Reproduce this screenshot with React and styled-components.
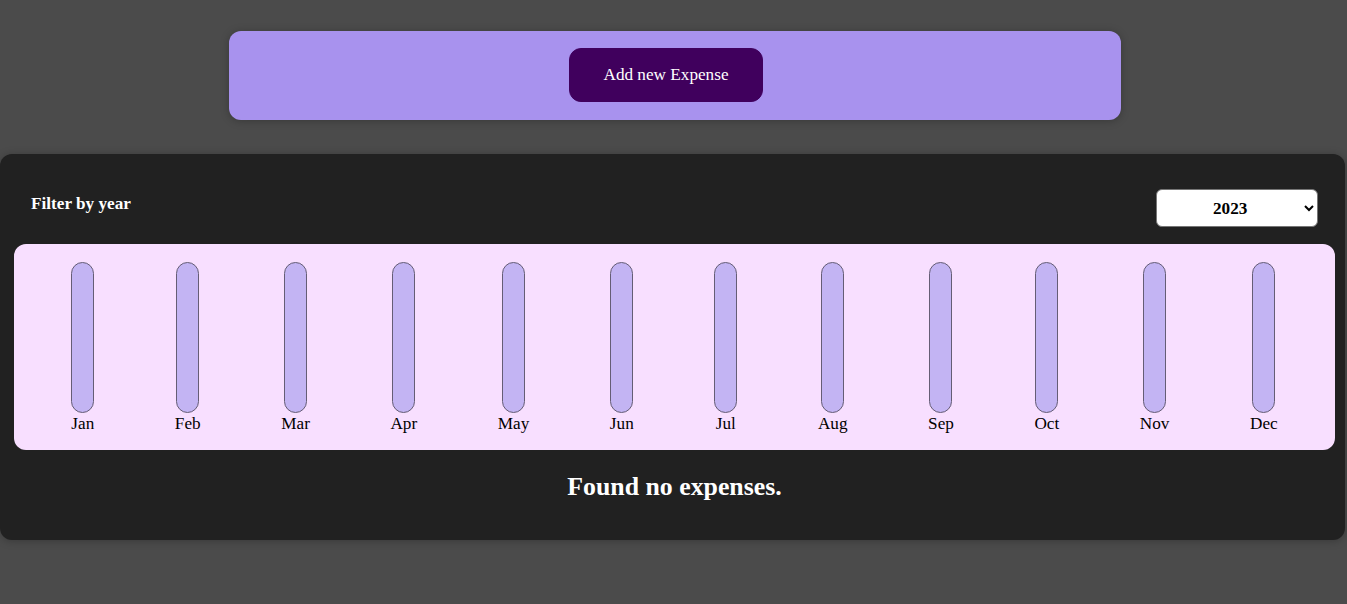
import React, { useState } from 'react'
import styled, { createGlobalStyle } from 'styled-components'

const GlobalStyle = createGlobalStyle`
  * {
    box-sizing: border-box;
  }

  html,
  body {
    margin: 0;
    padding: 0;
  }

  body {
    background-color: #4b4b4b;
    font-family: 'Liberation Serif', 'Times New Roman', serif;
    font-size: 17.2px;
  }
`

const months = ['Jan', 'Feb', 'Mar', 'Apr', 'May', 'Jun', 'Jul', 'Aug', 'Sep', 'Oct', 'Nov', 'Dec']

const Page = styled.div`
  padding-top: 31px;
  padding-bottom: 64px;
`

const Card = styled.div`
  border-radius: 12px;
  box-shadow: 0 1px 8px rgba(0, 0, 0, 0.25);
`

const NewExpense = styled(Card)`
  display: flex;
  justify-content: center;
  align-items: center;
  width: 892px;
  margin: 0 0 0 calc(50% - 445px);
  padding: 17px 17px 18px;
  background-color: #a892ee;
`

const AddButton = styled.button`
  font: inherit;
  cursor: pointer;
  height: 54px;
  padding: 0 33px;
  margin-right: 17px;
  border: 1px solid #40005d;
  border-radius: 12px;
  background-color: #40005d;
  color: #fff;
`

const Expenses = styled(Card)`
  width: 1345px;
  margin-top: 34px;
  padding: 18px 10px 17px 14px;
  background-color: #212121;
`

const Filter = styled.div`
  color: #fff;
  padding: 0 17px;
`

const FilterControl = styled.div`
  display: flex;
  width: 100%;
  align-items: center;
  justify-content: space-between;
  margin: 17px 0;

  label {
    font-weight: bold;
    margin-bottom: 8.6px;
  }

  select {
    font: inherit;
    font-weight: bold;
    width: 162px;
    height: 38px;
    padding: 0 48px 0 52px;
    border-radius: 6px;
    border: 1px solid #767676;
    background-color: #fff;
    color: #000;
  }
`

const Chart = styled.div`
  display: flex;
  justify-content: space-around;
  height: 206px;
  padding: 17px;
  border-radius: 12px;
  background-color: #f8dfff;
  text-align: center;
`

const Bar = styled.div`
  display: flex;
  flex-direction: column;
  align-items: center;
  height: 100%;
`

const BarInner = styled.div`
  flex: 1;
  width: 23px;
  margin-top: 1px;
  border: 1px solid #655d75;
  border-radius: 12px;
  background-color: #c3b4f3;
  overflow: hidden;
  display: flex;
  flex-direction: column;
  justify-content: flex-end;
`

const BarFill = styled.div`
  width: 100%;
  background-color: #40005d;
`

const BarLabel = styled.div`
  height: 20px;
  line-height: 21px;
  color: #000;
`

const Fallback = styled.h2`
  margin: 21.5px 0;
  color: #fff;
  text-align: center;
  font-size: 25.8px;
`

export default function App() {
  const [year, setYear] = useState('2023')

  return (
    <Page>
      <GlobalStyle />
      <NewExpense>
        <AddButton type="button">Add new Expense</AddButton>
      </NewExpense>

      <Expenses>
        <Filter>
          <FilterControl>
            <label>Filter by year</label>
            <select value={year} onChange={(e) => setYear(e.target.value)}>
              <option value="2023">2023</option>
              <option value="2022">2022</option>
              <option value="2021">2021</option>
              <option value="2020">2020</option>
            </select>
          </FilterControl>
        </Filter>

        <Chart>
          {months.map((m) => (
            <Bar key={m}>
              <BarInner>
                <BarFill style={{ height: '0%' }} />
              </BarInner>
              <BarLabel>{m}</BarLabel>
            </Bar>
          ))}
        </Chart>

        <Fallback>Found no expenses.</Fallback>
      </Expenses>
    </Page>
  )
}
